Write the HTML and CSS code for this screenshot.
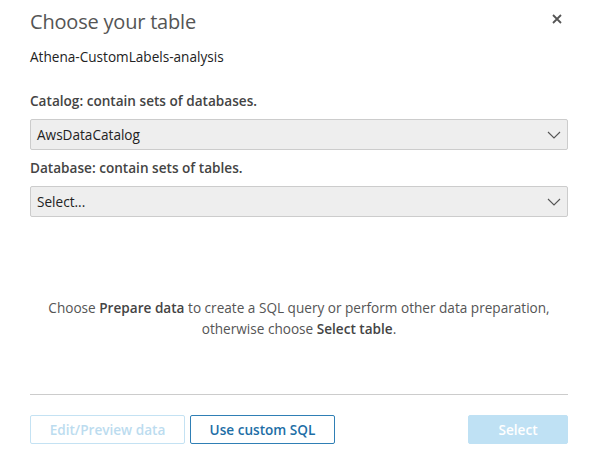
FILE: index.html
```html
<!DOCTYPE html>
<html>
<head>
<meta charset="utf-8">
<link rel="stylesheet" href="styles.css">
</head>
<body>
<div class="dialog">
  <div class="header">
    <h1 class="title">Choose your table</h1>
    <button class="close" aria-label="Close">
      <svg width="10" height="10" viewBox="0 0 10 10"><path d="M1 1L9 9M9 1L1 9" stroke="#555" stroke-width="1.8" fill="none"/></svg>
    </button>
  </div>
  <div class="source">Athena-CustomLabels-analysis</div>
  <div class="field">
    <label class="label">Catalog: contain sets of databases.</label>
    <div class="select"><span>AwsDataCatalog</span>
      <svg class="chev" width="14" height="8" viewBox="0 0 14 8"><path d="M1 1L7 7L13 1" stroke="#555" stroke-width="1.1" fill="none"/></svg>
    </div>
  </div>
  <div class="field">
    <label class="label">Database: contain sets of tables.</label>
    <div class="select"><span>Select...</span>
      <svg class="chev" width="14" height="8" viewBox="0 0 14 8"><path d="M1 1L7 7L13 1" stroke="#555" stroke-width="1.1" fill="none"/></svg>
    </div>
  </div>
  <p class="hint">Choose <b>Prepare data</b> to create a SQL query or perform other data preparation,<br>otherwise choose <b>Select table</b>.</p>
  <div class="footer">
    <button class="btn btn-disabled">Edit/Preview data</button>
    <button class="btn btn-outline">Use custom SQL</button>
    <button class="btn btn-primary">Select</button>
  </div>
</div>
</body>
</html>
```
FILE: styles.css
```css
* { box-sizing: border-box; }
html, body { margin: 0; padding: 0; background: #fff; }
body { font-family: "Open Sans", "Liberation Sans", sans-serif; color: #222; }
.dialog { width: 596px; height: 469px; padding: 0 28px 0 30px; display: flex; flex-direction: column; }
.header { display: flex; justify-content: space-between; align-items: flex-start; padding-top: 9px; }
.title { margin: 0; font-size: 20px; font-weight: 400; color: #555; line-height: 26px; letter-spacing: -0.2px; }
.close { border: 0; background: none; padding: 0; margin: 5px 6px 0 0; width: 10px; height: 10px; display: block; }
.close svg { display: block; }
.source { font-size: 13.6px; margin-top: 13px; line-height: 18px; color: #222; }
.field { display: flex; flex-direction: column; }
.label { font-size: 13.6px; font-weight: 600; color: #444; line-height: 18px; margin-top: 26px; margin-bottom: 9px; }
.field + .field .label { margin-top: 9px; }
.select { height: 31px; background: #eee; border: 1px solid #ccc; border-radius: 2px; display: flex; align-items: center; justify-content: space-between; padding: 0 6px 0 6px; font-size: 13.6px; color: #222; }
.hint { margin: 80px 0 0; text-align: center; font-size: 13.6px; line-height: 21px; color: #555; }
.hint b { font-weight: 600; color: #444; }
.footer { margin-top: 55px; border-top: 1px solid #ccc; padding-top: 20px; display: flex; gap: 5px; }
.btn { height: 29px; font-family: inherit; font-size: 13.6px; font-weight: 600; border-radius: 2px; padding: 0; }
.btn-disabled { width: 155px; background: #fff; border: 1px solid #c4e2f3; color: #bcdcef; }
.btn-outline { width: 145px; background: #fff; border: 1px solid #2f7fb5; color: #1d6ea6; }
.btn-primary { width: 100px; margin-left: auto; background: #bfe1f4; border: 1px solid #bfe1f4; color: #fff; }
```
